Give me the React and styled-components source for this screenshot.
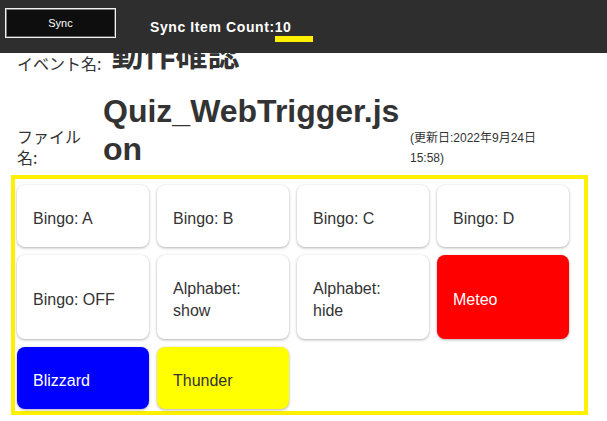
import React from "react";
import styled, { createGlobalStyle } from "styled-components";

const triggers = [
  { label: "Bingo: A" },
  { label: "Bingo: B" },
  { label: "Bingo: C" },
  { label: "Bingo: D" },
  { label: "Bingo: OFF" },
  { label: "Alphabet: show" },
  { label: "Alphabet: hide" },
  { label: "Meteo", bg: "#ff0000", fg: "#ffffff" },
  { label: "Blizzard", bg: "#0000ff", fg: "#ffffff" },
  { label: "Thunder", bg: "#ffff00", fg: "#333333" },
];

const App = () => {
  return (
    <>
      <GlobalStyle />
      <Header>
        <SyncButton type="button">Sync</SyncButton>
        <SyncCount>
          Sync Item Count:<CountValue>10</CountValue>
        </SyncCount>
      </Header>
      <Main>
        <InfoRow>
          <Label>イベント名:</Label>
          <Title>動作確認</Title>
        </InfoRow>
        <InfoRow $top={18}>
          <Label $width={76}>ファイル名:</Label>
          <Title $width={298}>Quiz_WebTrigger.json</Title>
          <UpdatedAt>(更新日:2022年9月24日 15:58)</UpdatedAt>
        </InfoRow>
        <TriggerGrid>
          {triggers.map((t) => (
            <TriggerCard key={t.label} $bg={t.bg} $fg={t.fg}>
              {t.label}
            </TriggerCard>
          ))}
        </TriggerGrid>
      </Main>
    </>
  );
};

const GlobalStyle = createGlobalStyle`
  body {
    margin: 0;
    background: #ffffff;
    font-family: "Liberation Sans", "Noto Sans CJK JP", sans-serif;
  }
`;

const Header = styled.header`
  position: fixed;
  top: 0;
  left: 0;
  right: 0;
  height: 53px;
  display: flex;
  align-items: flex-start;
  background: #2e2e2e;
  z-index: 10;
`;

const SyncButton = styled.button`
  margin: 8px 0 0 5px;
  width: 111px;
  height: 30px;
  padding: 0;
  background: #0e0e0e;
  border: 1px solid #f2f2f2;
  box-shadow: inset 1px 1px 0 #7a7a7a, inset -1px -1px 0 #5a5a5a;
  color: #ffffff;
  font-family: "Liberation Sans", sans-serif;
  font-size: 11px;
`;

const SyncCount = styled.div`
  margin: 19px 0 0 34px;
  color: #ffffff;
  font-family: "Liberation Sans", sans-serif;
  font-weight: bold;
  font-size: 14px;
  line-height: 16px;
  letter-spacing: 0.6px;
`;

const CountValue = styled.span`
  display: inline-block;
  min-width: 38px;
  height: 23px;
  border-bottom: 6px solid #fff000;
  box-sizing: border-box;
  vertical-align: top;
`;

const Main = styled.main`
  padding-top: 36px;
`;

const InfoRow = styled.div`
  display: flex;
  align-items: flex-end;
  padding-left: 17px;
  margin-top: ${(p) => p.$top || 0}px;
`;

const Label = styled.div`
  flex-shrink: 0;
  width: ${(p) => (p.$width ? `${p.$width}px` : "auto")};
  margin-right: 10px;
  color: #333333;
  font-family: "Noto Sans CJK JP", sans-serif;
  font-size: 16px;
  line-height: 21px;
`;

const Title = styled.h1`
  margin: 0;
  width: ${(p) => (p.$width ? `${p.$width}px` : "auto")};
  color: #333333;
  font-family: "Liberation Sans", "Noto Sans CJK JP", sans-serif;
  font-size: 32px;
  line-height: 38px;
  font-weight: bold;
  word-break: break-all;
`;

const UpdatedAt = styled.div`
  width: 140px;
  margin-left: 9px;
  color: #333333;
  font-family: "Liberation Sans", "Noto Sans CJK JP", sans-serif;
  font-size: 12px;
  line-height: 20px;
`;

const TriggerGrid = styled.div`
  margin: 7px 0 0 11px;
  width: 577px;
  box-sizing: border-box;
  border: 4px solid #fff000;
  padding: 6px 15px 2px 2px;
  display: grid;
  grid-template-columns: repeat(4, 132px);
  gap: 8px;
`;

const TriggerCard = styled.div`
  display: flex;
  align-items: center;
  box-sizing: border-box;
  min-height: 62px;
  padding: 23px 16px 17px;
  border-radius: 8px;
  background: ${(p) => p.$bg || "#ffffff"};
  color: ${(p) => p.$fg || "#333333"};
  font-size: 16px;
  line-height: 22px;
  box-shadow: 0 1px 3px rgba(0, 0, 0, 0.3), 0 0 1px rgba(0, 0, 0, 0.08);
`;

export default App;
